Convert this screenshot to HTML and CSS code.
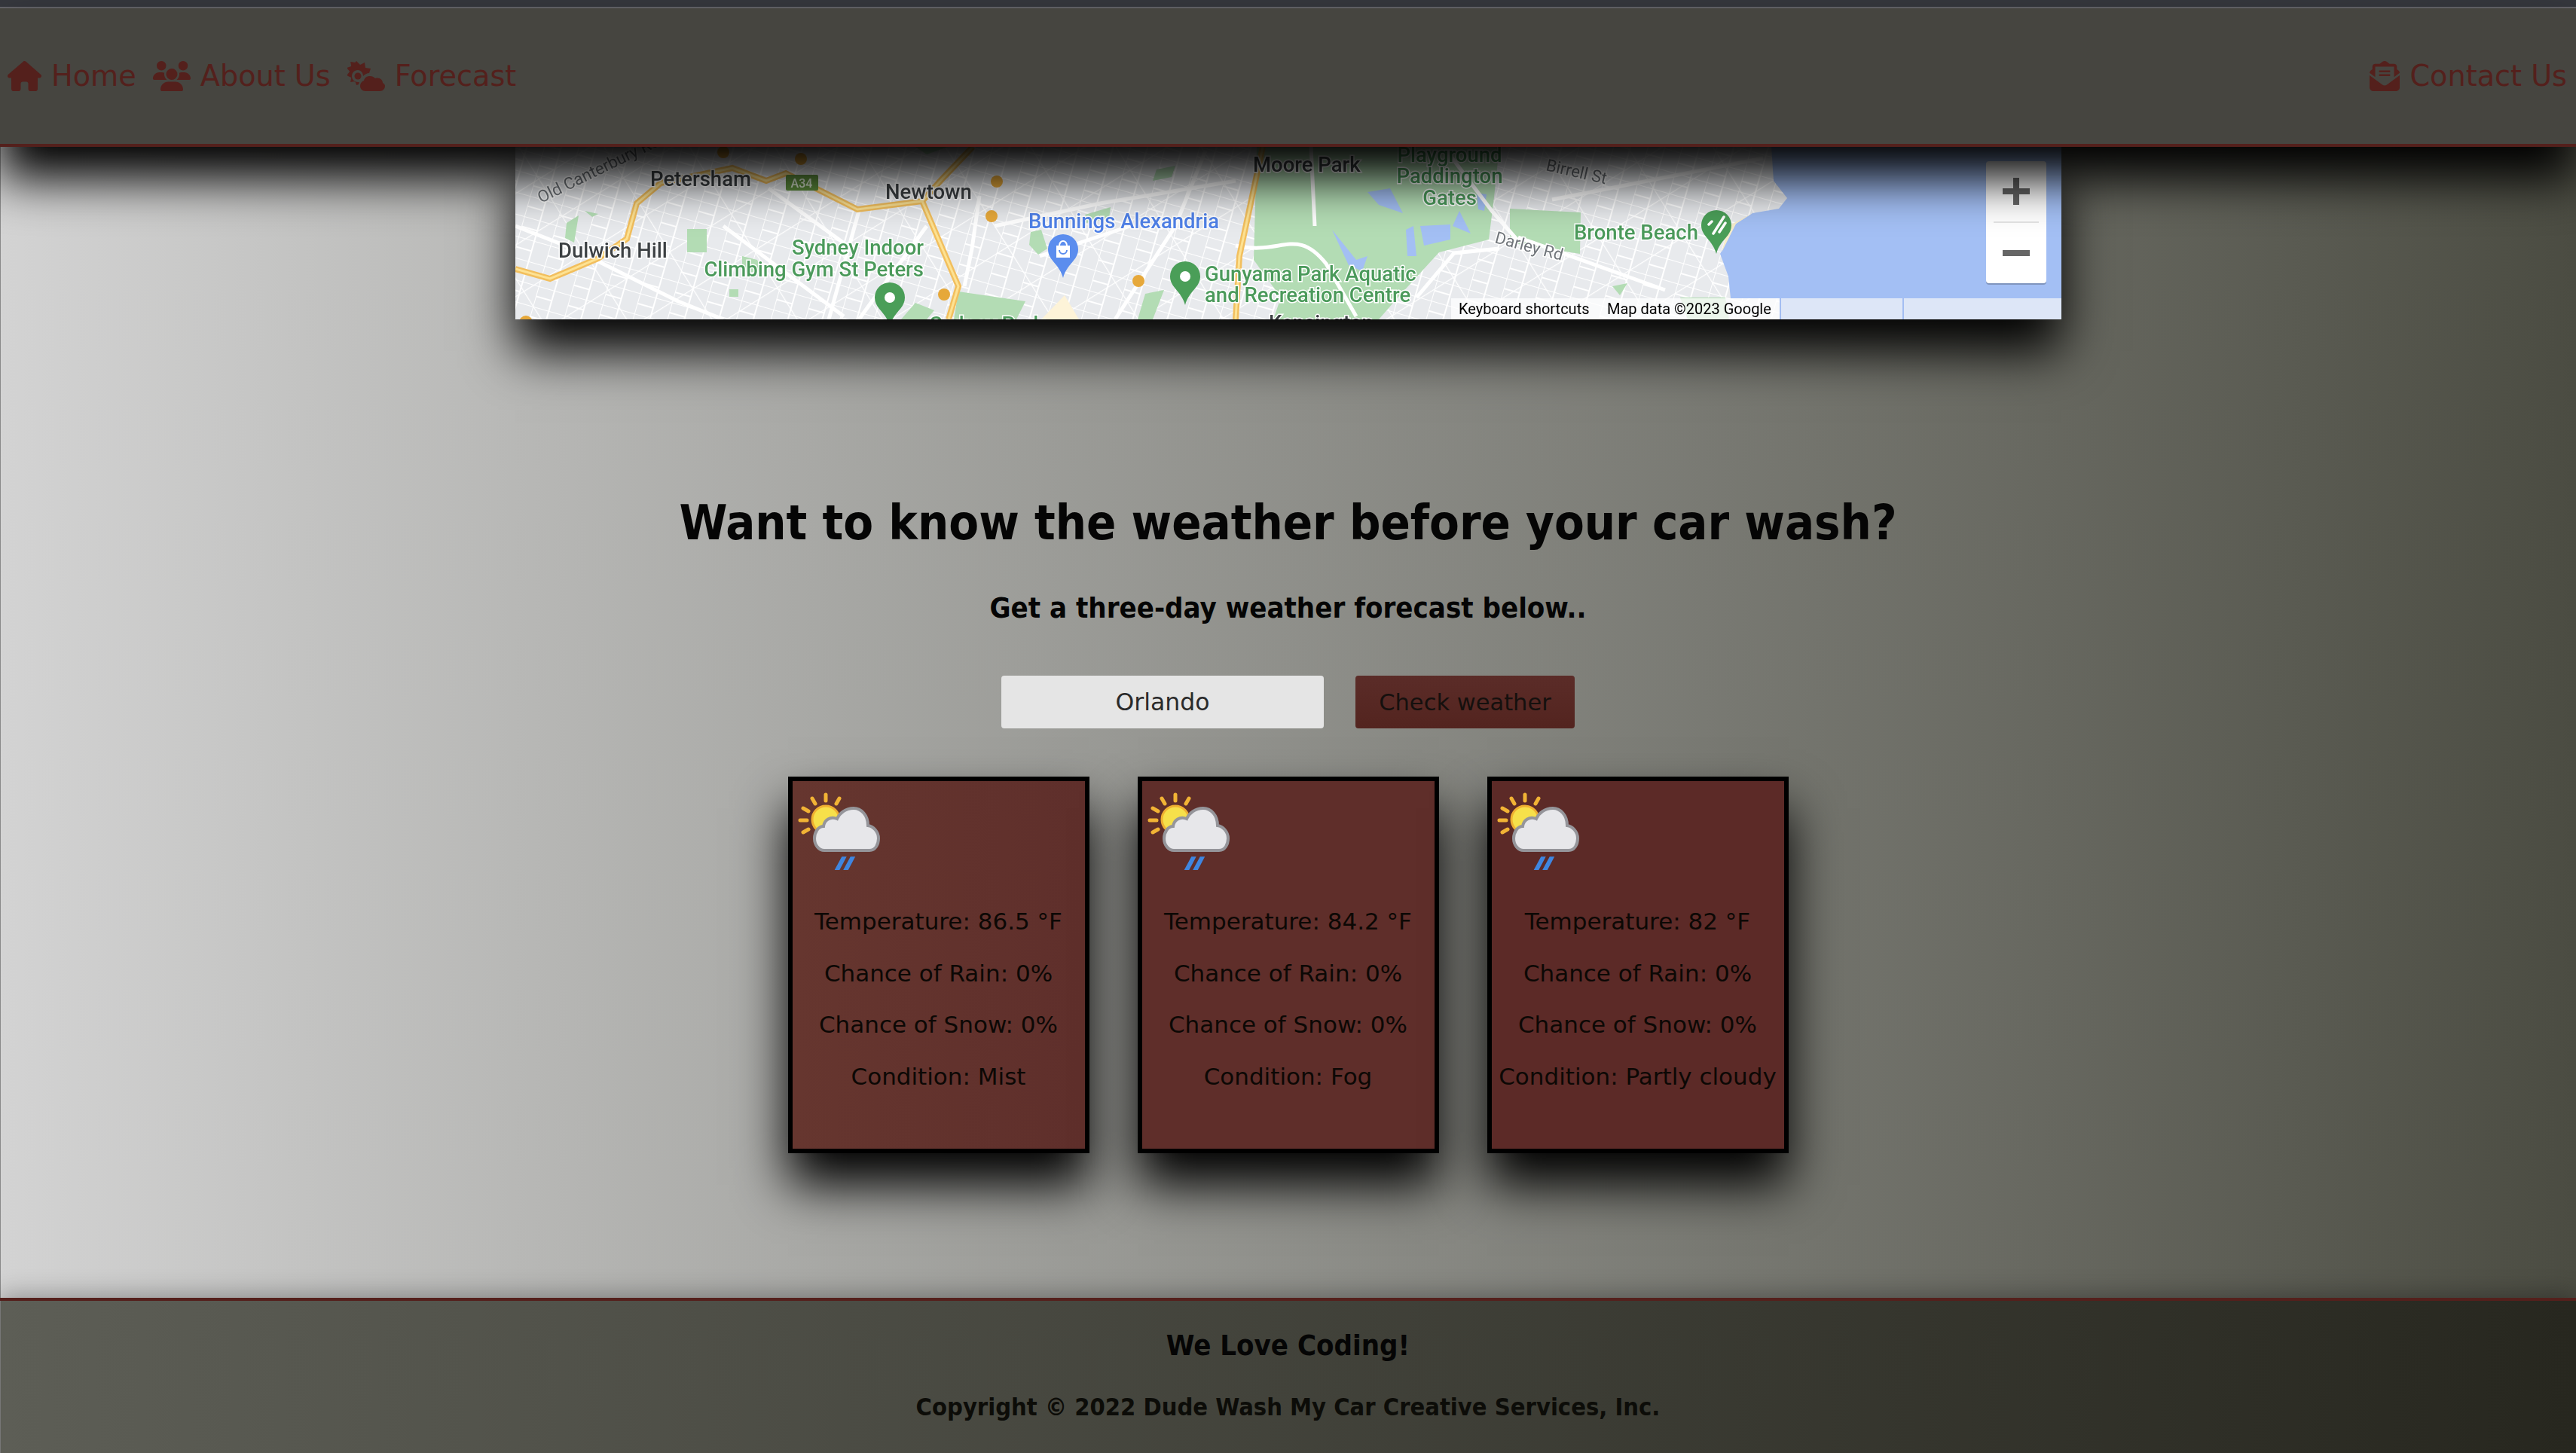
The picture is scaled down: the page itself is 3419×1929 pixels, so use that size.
FILE: index.html
```html
<!DOCTYPE html>
<html>
  <head>
    <title>Dude Wash My Car</title>
    <link rel="stylesheet" href="styles.css">
  </head>
  <body>
    <div class="top-strip"></div>
    <header class="site-header">
      <nav class="nav-group">
        <a class="nav-link" href="#">
          <svg class="nav-icon" viewBox="0 0 576 512"><path d="M575.8 255.5c0 18-15 32.1-32 32.1h-32l.7 160.2c0 2.7-.2 5.4-.5 8.1V472c0 22.1-17.9 40-40 40H456c-1.1 0-2.2 0-3.3-.1c-1.4 .1-2.8 .1-4.2 .1H416 392c-22.1 0-40-17.9-40-40V448 384c0-17.7-14.3-32-32-32H256c-17.7 0-32 14.3-32 32v64 24c0 22.1-17.9 40-40 40H160 128.1c-1.5 0-3-.1-4.5-.2c-1.2 .1-2.4 .2-3.6 .2H104c-22.1 0-40-17.9-40-40V360c0-.9 0-1.9 .1-2.8V287.6H32c-18 0-32-14-32-32.1c0-9 3-17 10-24L266.4 8c7-7 15-8 22-8s15 2 21 7L564.8 231.5c8 7 12 15 11 24z"/></svg>
          Home
        </a>
        <a class="nav-link" href="#">
          <svg class="nav-icon" viewBox="0 0 640 512"><path d="M144 0a80 80 0 1 1 0 160A80 80 0 1 1 144 0zM512 0a80 80 0 1 1 0 160A80 80 0 1 1 512 0zM0 298.7C0 239.8 47.8 192 106.7 192h42.7c15.9 0 31 3.5 44.6 9.7c-1.3 7.2-1.9 14.7-1.9 22.3c0 38.2 16.8 72.5 43.3 96c-.2 0-.4 0-.7 0H21.3C9.6 320 0 310.4 0 298.7zM405.3 320c-.2 0-.4 0-.7 0c26.6-23.5 43.3-57.8 43.3-96c0-7.6-.7-15-1.9-22.3c13.6-6.3 28.7-9.7 44.6-9.7h42.7C592.2 192 640 239.8 640 298.7c0 11.8-9.6 21.3-21.3 21.3H405.3zM224 224a96 96 0 1 1 192 0 96 96 0 1 1 -192 0zM128 485.3C128 411.7 187.7 352 261.3 352H378.7C452.3 352 512 411.7 512 485.3c0 14.7-11.9 26.7-26.7 26.7H154.7c-14.7 0-26.7-11.9-26.7-26.7z"/></svg>
          About Us
        </a>
        <a class="nav-link" href="#">
          <svg class="nav-icon" viewBox="0 0 50 40"><path fill-rule="evenodd" d="M12 0l5 5 6-3 1 7 7 1-2 6c-3 0-6 2-8 4 0-4-3-8-7-8-5 0-8 4-8 8s3 8 8 8c1 0 2 0 2-.5-.5 1-.8 2.500-.8 3.500l-3 1-2-5-6 1 1-6-6-3 4-5-4-5 6-2-1-6 6 1z"/><circle cx="14" cy="20" r="4.500"/><path d="M24 40c-4 0-7-3-7-7 0-3 2-6 5-7 1-4 4-6 8-6 3 0 5 1 7 3 1-.5 2-.5 3-.5 4 0 7 3 7 6.500 2 1 3 3 3 4 0 4-3 7-7 7z"/></svg>
          Forecast
        </a>
      </nav>
      <nav class="nav-group">
        <a class="nav-link" href="#">
          <svg class="nav-icon" viewBox="0 0 512 512"><path d="M215.4 96H144 107.8 96v8.8V144v40.4 89L.2 202.5c1.600-18.100 10.900-34.900 25.700-45.800L48 140.300V96c0-26.500 21.500-48 48-48h76.600l49.900-36.900C232.200 3.900 243.900 0 256 0s23.800 3.900 33.500 11L339.400 48H416c26.500 0 48 21.500 48 48v44.300l22.100 16.400c14.800 10.900 24.100 27.700 25.700 45.800L416 273.400v-89V144 104.800 96H404.200 368 296.600 215.400zM0 448V242.100L217.600 403.300c11.100 8.200 24.600 12.700 38.400 12.700s27.300-4.400 38.400-12.700L512 242.100V448v0c0 35.300-28.700 64-64 64H64c-35.300 0-64-28.700-64-64v0zM176 160H336c8.800 0 16 7.200 16 16s-7.200 16-16 16H176c-8.800 0-16-7.200-16-16s7.200-16 16-16zm0 64H336c8.800 0 16 7.200 16 16s-7.200 16-16 16H176c-8.800 0-16-7.200-16-16s7.200-16 16-16z"/></svg>
          Contact Us
        </a>
      </nav>
    </header>

    <main class="page-main">
      <div class="map-frame">
        <svg class="map-art" viewBox="684 195 2052 229">
          <defs>
            <pattern id="streets-a" width="44" height="28" patternUnits="userSpaceOnUse" patternTransform="rotate(16)">
              <path d="M0 0H44M0 14H22M0 0V28M22 0V28" stroke="#fff" stroke-width="2" fill="none"/>
            </pattern>
            <pattern id="streets-b" width="96" height="58" patternUnits="userSpaceOnUse" patternTransform="rotate(-32)">
              <path d="M0 0H96M0 0V58" stroke="#fff" stroke-width="2.500" fill="none"/>
            </pattern>
          </defs>
          <rect x="684" y="195" width="2052" height="229" fill="#e8eaed"/>
          <rect x="684" y="195" width="2052" height="229" fill="url(#streets-a)"/>
          <rect x="684" y="195" width="2052" height="229" fill="url(#streets-b)"/>

          <g class="map-main-road">
            <path d="M684 300L760 330L900 400L960 424M960 300L1120 420M1230 300L1140 424M1320 300L1460 270L1640 240M1480 424L1560 300L1600 200M1380 340L1500 300M1020 250L1130 330M1140 280L1100 424M1300 260L1290 330L1280 380"/>
          </g>

          <g class="map-park">
            <path d="M1668 195H1990L1983 262L1976 318L1910 335L1858 392L1830 424H1690L1700 395L1664 345Z"/>
            <path d="M2004 277L2098 282L2097 337L2004 322Z"/>
            <path d="M1272 387L1361 400L1349 424L1266 424Z"/>
            <path d="M912 304H938V335H912Z"/>
            <path d="M752 296L768 286L762 322L750 316Z"/>
            <path d="M776 280L794 284L786 288Z"/>
            <path d="M985 340L1005 345L1012 360L985 362Z"/>
            <path d="M968 384H980V394H968Z"/>
            <path d="M1368 308L1382 305L1390 330L1378 338L1366 325Z"/>
            <path d="M1240 412L1215 402L1196 424H1230Z"/>
            <path d="M1440 285L1474 275L1472 290L1442 296Z"/>
            <path d="M2140 380L2160 376L2150 392Z"/>
            <path d="M2230 395H2290L2295 424H2240Z"/>
            <path d="M1520 390L1545 385L1530 424H1510Z"/>
            <path d="M1230 205L1258 195H1215Z"/>
            <path d="M1535 225L1560 220L1555 235L1530 240Z"/>
          </g>
          <path d="M1382 424L1413 392L1432 424Z" fill="#fdf3d8"/>
          <g class="map-pond">
            <path d="M1815 255L1845 250L1862 283L1830 272Z"/>
            <path d="M1866 305L1868 340L1880 340L1876 300Z"/>
            <path d="M1885 300L1925 298L1925 318L1890 326Z"/>
            <path d="M1937 280L1952 310L1928 300Z"/>
            <path d="M1960 256L1973 258L1970 280L1962 278Z"/>
            <path d="M1768 305L1800 345L1815 340L1808 360L1790 352Z"/>
          </g>
          <path class="map-water" d="M2351 195L2354 240L2372 263L2361 277L2326 283L2304 297L2283 337L2294 367L2297 396H2736V195Z"/>
          <path d="M2326 283L2304 297L2285 335L2294 300Z" fill="#f5eccb"/>

          <g class="map-main-road">
            <path d="M1640 326C1700 340 1720 300 1760 350L1800 420M1740 195L1745 300M1990 330L1930 336L1880 395M2015 315L2210 385M2060 265L2340 210M1920 200L1980 280L2015 320"/>
          </g>
          <g class="map-highway">
            <path d="M684 357L730 370L794 343L832 317L845 270L877 243L972 223L1017 240L1043 230L1138 278L1224 267L1272 380L1259 424M1224 267L1250 238L1291 195M1676 195L1645 340L1640 424"/>
          </g>
          <g class="map-highway-core">
            <path d="M684 357L730 370L794 343L832 317L845 270L877 243L972 223L1017 240L1043 230L1138 278L1224 267L1272 380L1259 424M1224 267L1250 238L1291 195M1676 195L1645 340L1640 424"/>
          </g>

          <g class="map-marker">
            <circle cx="960" cy="202" r="8"/>
            <circle cx="1063" cy="211" r="8"/>
            <circle cx="1323" cy="241" r="8"/>
            <circle cx="1316" cy="287" r="8"/>
            <circle cx="1511" cy="373" r="8"/>
            <circle cx="1253" cy="391" r="8"/>
            <circle cx="698" cy="428" r="9"/>
          </g>

          <rect x="1043" y="232" width="43" height="21" rx="2" fill="#5f8f3e"/>
          <text class="map-shield" x="1064" y="249">A34</text>

          <text class="map-road-label" transform="translate(718 270) rotate(-26)">Old Canterbury Rd</text>
          <text class="map-road-label" transform="translate(2051 226) rotate(13)">Birrell St</text>
          <text class="map-road-label" transform="translate(1983 322) rotate(15)">Darley Rd</text>

          <text class="map-town" x="863" y="247">Petersham</text>
          <text class="map-town" x="1175" y="264">Newtown</text>
          <text class="map-town" x="741" y="342">Dulwich Hill</text>
          <text class="map-town" x="1663" y="228">Moore Park</text>

          <text class="map-place map-end" x="1226" y="338">Sydney Indoor</text>
          <text class="map-place map-end" x="1226" y="367">Climbing Gym St Peters</text>
          <text class="map-place" x="1234" y="440">Sydney Park</text>
          <text class="map-place" x="1599" y="373">Gunyama Park Aquatic</text>
          <text class="map-place" x="1599" y="401">and Recreation Centre</text>
          <text class="map-place map-middle" x="1924" y="215">Playground</text>
          <text class="map-place map-middle" x="1924" y="243">Paddington</text>
          <text class="map-place map-middle" x="1924" y="272">Gates</text>
          <text class="map-place" x="2089" y="318">Bronte Beach</text>
          <text class="map-town" x="1684" y="438">Kensington</text>
          <text class="map-shop" x="1365" y="303">Bunnings Alexandria</text>

          <path class="map-pin-shop" d="M1411 369C1406 350 1391 346 1391 331a20 20 0 0 1 40 0C1431 346 1416 350 1411 369Z"/>
          <path d="M1402 326H1420V342H1402Z" fill="#fff"/>
          <path d="M1406 326a5 6 0 0 1 10 0" fill="none" stroke="#fff" stroke-width="2"/>
          <path d="M1406 332a5 5 0 0 0 10 0" fill="none" stroke="#5b8dee" stroke-width="2"/>

          <path class="map-pin-place" d="M1181 433C1176 414 1161 410 1161 395a20 20 0 0 1 40 0C1201 410 1186 414 1181 433Z"/>
          <circle cx="1181" cy="395" r="7" fill="#fff"/>
          <path class="map-pin-place" d="M1573 405C1568 386 1553 382 1553 367a20 20 0 0 1 40 0C1593 382 1578 386 1573 405Z"/>
          <circle cx="1573" cy="367" r="7" fill="#fff"/>
          <path class="map-pin-place" d="M2278 337C2273 318 2258 314 2258 299a20 20 0 0 1 40 0C2298 314 2283 318 2278 337Z"/>
          <path d="M2274 310L2288 288M2282 308L2290 296M2268 298L2272 294" stroke="#fff" stroke-width="3.500" stroke-linecap="round" fill="none"/>

          <rect class="map-bar-text" x="1926" y="396" width="437" height="28"/>
          <rect class="map-bar-water" x="2363" y="396" width="373" height="28"/>
          <path d="M2363 396V424M2526 396V424" stroke="#a3bdf2" stroke-width="2"/>
          <text class="map-credit" x="1936" y="417">Keyboard shortcuts</text>
          <text class="map-credit" x="2133" y="417">Map data ©2023 Google</text>

          <rect x="2636" y="216" width="80" height="162" rx="4" fill="#000" opacity=".22"/>
          <rect x="2636" y="214" width="80" height="162" rx="4" fill="#fff"/>
          <path d="M2646 295H2706" stroke="#e4e4e4" stroke-width="2"/>
          <path d="M2658 250H2672V236H2680V250H2694V258H2680V272H2672V258H2658ZM2658 332H2694V340H2658Z" fill="#666"/>
        </svg>
      </div>

      <h1 class="intro-title">Want to know the weather before your car wash?</h1>
      <h2 class="intro-sub">Get a three-day weather forecast below..</h2>

      <form class="city-form">
        <input class="city-input" value="Orlando"/>
        <button class="city-btn" type="button">Check weather</button>
      </form>

      <svg class="sprite-holder">
        <symbol id="partly-rain" viewBox="0 0 120 120">
          <g stroke="#f1b335" stroke-width="5" stroke-linecap="round">
            <path d="M44 18V26M26 23L30 30M62 23L58 30M14 36L21 40M10 52H19M14 68L21 64"/>
          </g>
          <circle cx="44" cy="51" r="18" fill="#f6e04a" stroke="#f0b030" stroke-width="3"/>
          <path d="M42 92H102C110 92 114 84 114 76C114 67 107 60 100 59C100 45 91 36 81 36C70 36 62 43 59 50C50 46 42 52 41 60C34 60 29 68 29 76C29 85 35 92 42 92Z" fill="#e7e7ea" stroke="#95959a" stroke-width="4"/>
          <path d="M55.700 118H62.300L71.700 100.300H65.300ZM67.200 118H73.800L83.200 100.300H76.800Z" fill="#3f86e0"/>
        </symbol>
      </svg>

      <section class="forecast-row">
        <article class="forecast-card card-first">
          <svg class="weather-icon"><use href="#partly-rain"/></svg>
          <div class="forecast-lines">
            <p>Temperature: 86.5 °F</p>
            <p>Chance of Rain: 0%</p>
            <p>Chance of Snow: 0%</p>
            <p>Condition: Mist</p>
          </div>
        </article>
        <article class="forecast-card card-second">
          <svg class="weather-icon"><use href="#partly-rain"/></svg>
          <div class="forecast-lines">
            <p>Temperature: 84.2 °F</p>
            <p>Chance of Rain: 0%</p>
            <p>Chance of Snow: 0%</p>
            <p>Condition: Fog</p>
          </div>
        </article>
        <article class="forecast-card card-third">
          <svg class="weather-icon"><use href="#partly-rain"/></svg>
          <div class="forecast-lines">
            <p>Temperature: 82 °F</p>
            <p>Chance of Rain: 0%</p>
            <p>Chance of Snow: 0%</p>
            <p>Condition: Partly cloudy</p>
          </div>
        </article>
      </section>
    </main>

    <footer class="site-footer">
      <h3 class="footer-love">We Love Coding!</h3>
      <p class="footer-copy">Copyright © 2022 Dude Wash My Car Creative Services, Inc.</p>
    </footer>
  </body>
</html>
```

FILE: styles.css
```css
* {
  box-sizing: border-box;
}

html, body {
  margin: 0;
  height: 100%;
}

body {
  display: flex;
  flex-direction: column;
  height: 1929px;
  overflow: hidden;
  font-family: "DejaVu Sans", "Liberation Sans", sans-serif;
  color: #050505;
}

.top-strip {
  height: 11px;
  flex: none;
  background: #36383e;
  border-bottom: 2px solid #66666b;
}

.site-header {
  position: relative;
  z-index: 2;
  flex: none;
  height: 184px;
  padding: 0 12px 0 10px;
  display: flex;
  justify-content: space-between;
  align-items: center;
  background: #464540;
  border-bottom: 4px solid #54201c;
  box-shadow: 0 42px 64px #000;
}

.nav-group {
  display: flex;
  gap: 22px;
}

.nav-link {
  display: flex;
  align-items: center;
  gap: 13px;
  height: 40px;
  font-size: 38.200px;
  color: #54201c;
  text-decoration: none;
}

.nav-icon {
  height: 40px;
  fill: #54201c;
}

.page-main {
  flex: 1;
  display: flex;
  flex-direction: column;
  align-items: center;
  background: linear-gradient(to right, #d3d3d3, #4b4c42);
  box-shadow: inset 1px 0 0 #8a8a8a;
}

.map-frame {
  width: 2052px;
  height: 229px;
  flex: none;
  background: #e8eaed;
  box-shadow: 0 42px 64px #000;
}

.map-art {
  display: block;
  width: 100%;
  height: 100%;
  filter: blur(.6px);
}

.map-park {
  fill: #b3dcb4;
}

.map-pond {
  fill: #a3bff4;
}

.map-water {
  fill: #a3bff4;
}

.map-main-road {
  fill: none;
  stroke: #fff;
  stroke-width: 5;
}

.map-highway {
  fill: none;
  stroke: #f2bf5e;
  stroke-width: 8;
}

.map-highway-core {
  fill: none;
  stroke: #fde293;
  stroke-width: 3;
}

.map-marker {
  fill: #e6a83a;
}

.map-shield {
  font: 500 16px Roboto, sans-serif;
  fill: #dfe9d6;
  text-anchor: middle;
}

.map-town,
.map-place,
.map-shop,
.map-road-label {
  font-family: Roboto, sans-serif;
  paint-order: stroke;
  stroke: #fff;
  stroke-width: 3px;
}

.map-town {
  font-size: 27.500px;
  font-weight: 500;
  fill: #3c4043;
}

.map-place {
  font-size: 27.500px;
  font-weight: 500;
  fill: #4b9a5b;
}

.map-end {
  text-anchor: end;
}

.map-middle {
  text-anchor: middle;
}

.map-shop {
  font-size: 27.500px;
  font-weight: 500;
  fill: #4f81e8;
}

.map-road-label {
  font-size: 22px;
  fill: #70757a;
}

.map-pin-shop {
  fill: #5b8dee;
}

.map-pin-place {
  fill: #4a9e58;
}

.map-bar-text {
  fill: #fff;
  fill-opacity: .75;
}

.map-bar-water {
  fill: #dde6f7;
}

.map-credit {
  font: 20px Roboto, sans-serif;
  fill: #000;
}

.intro-title {
  margin: 233px 0 0;
  font-family: "DejaVu Sans Condensed", "DejaVu Sans", sans-serif;
  font-size: 64.500px;
  line-height: 74px;
  font-weight: 700;
}

.intro-sub {
  margin: 53px 0 0;
  font-family: "DejaVu Sans Condensed", "DejaVu Sans", sans-serif;
  font-size: 38px;
  line-height: 46px;
  font-weight: 700;
}

.city-form {
  display: flex;
  gap: 42px;
  margin-top: 67px;
}

.city-input {
  width: 428px;
  height: 70px;
  border: 0;
  border-radius: 4px;
  background: #e5e5e5;
  font: 31.500px "DejaVu Sans", sans-serif;
  color: #2a2a2a;
  text-align: center;
}

.city-btn {
  width: 291px;
  height: 70px;
  border: 0;
  border-radius: 4px;
  background: linear-gradient(#5b2c28, #53241f);
  font: 30.500px "DejaVu Sans", sans-serif;
  color: #15100e;
}

.sprite-holder {
  width: 0;
  height: 0;
  position: absolute;
}

.forecast-row {
  display: flex;
  gap: 64px;
  margin-top: 64px;
}

.forecast-card {
  width: 400px;
  height: 500px;
  border: 6px solid #000;
  box-shadow: 0 42px 64px #000;
  background: #63332e;
}

.card-first {
  background: linear-gradient(to right, #66362f, #5f2f2b);
}

.card-second {
  background: #5f2e2a;
}

.card-third {
  background: #5c2a27;
}

.weather-icon {
  display: block;
  width: 120px;
  height: 120px;
}

.forecast-lines {
  display: flex;
  flex-direction: column;
  gap: 32.500px;
  margin-top: 48px;
  font-size: 31px;
  line-height: 36px;
  text-align: center;
  white-space: nowrap;
  color: #0c0805;
}

.forecast-lines p {
  margin: 0;
}

.site-footer {
  position: relative;
  flex: none;
  height: 206px;
  text-align: center;
  background: linear-gradient(to right, #5d5e56, #27271f);
  border-top: 4px solid #54201c;
  box-shadow: 0 -4px 30px rgba(0, 0, 0, .3), inset 1px 0 0 #777;
}

.footer-love {
  margin: 36px 0 0;
  font-family: "DejaVu Sans Condensed", "DejaVu Sans", sans-serif;
  font-size: 38px;
  line-height: 46px;
  font-weight: 700;
}

.footer-copy {
  margin: 40px 0 0;
  font-family: "DejaVu Sans Condensed", "DejaVu Sans", sans-serif;
  font-size: 32.400px;
  line-height: 38px;
  font-weight: 700;
  color: #0c0c08;
}
```
